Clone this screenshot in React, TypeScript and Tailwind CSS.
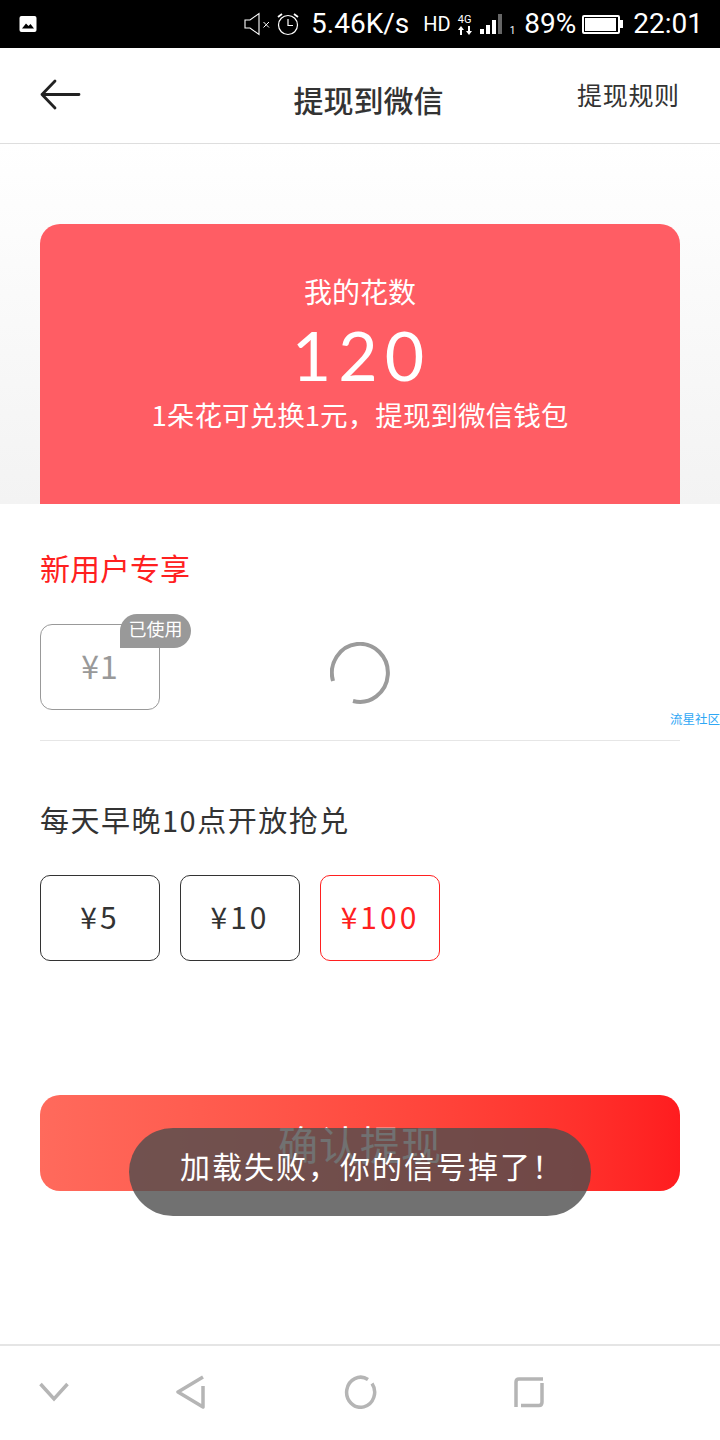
const CJK = "font-['Noto_Sans_CJK_SC','Noto_Sans',sans-serif]"

function StatusBar() {
  return (
    <div className="h-12 bg-black flex items-center text-white font-['Roboto',sans-serif] shrink-0 pl-[19px] pr-[17px]">
      <svg width="18" height="18" viewBox="0 0 18 18">
        <rect x="0.5" y="1" width="17" height="16" rx="2" fill="#fff" />
        <path d="M3 13.5 L7 8.5 L9.5 11 L11.5 9 L15 13.5 Z" fill="#000" />
      </svg>
      <div className="flex-1" />
      <svg width="26" height="24" viewBox="0 0 26 24" fill="none" stroke="#fff" strokeWidth="1.1">
        <path d="M1 8 H6 L15 1.5 V22.5 L6 16 H1 Z" />
        <path d="M19.5 10 L25 15.5 M25 10 L19.5 15.5" strokeWidth="1" />
      </svg>
      <svg className="ml-[6px]" width="24" height="24" viewBox="0 0 24 24" fill="none" stroke="#fff" strokeWidth="1.2">
        <circle cx="12" cy="13" r="9.5" />
        <path d="M12 7 V13.5 H17" />
        <path d="M2 5 L6 2 M22 5 L18 2" strokeWidth="1.8" />
      </svg>
      <span className="ml-[11px] text-[28px] leading-none">5.46K/s</span>
      <span className="ml-[14px] text-[20px] leading-none">HD</span>
      <div className="ml-[6px] flex flex-col items-center w-4 leading-none">
        <span className="text-[11px] leading-[12px]">4G</span>
        <svg width="14" height="9" viewBox="0 0 14 9" fill="#fff">
          <path d="M3 0 L6 4 H4 V9 H2 V4 H0 Z M11 9 L8 5 H10 V0 H12 V5 H14 Z" />
        </svg>
      </div>
      <div className="ml-[7px] flex items-end gap-[2px] h-[20px]">
        <div className="w-1 h-[5px] bg-white" />
        <div className="w-1 h-[9px] bg-white" />
        <div className="w-1 h-[14px] bg-white" />
        <div className="w-1 h-[20px] bg-[#666]" />
      </div>
      <span className="ml-[8px] text-[10px] leading-none self-end mb-[12px]">1</span>
      <span className="ml-[9px] text-[28px] leading-none">89%</span>
      <div className="ml-[6px] flex items-center">
        <div className="w-[38px] h-[19px] border-2 border-white rounded-[2px] p-[1px]">
          <div className="w-[95%] h-full bg-white" />
        </div>
        <div className="w-[3px] h-[8px] bg-white" />
      </div>
      <span className="ml-[10px] text-[28px] leading-none">22:01</span>
    </div>
  )
}

function Amount({ label, tone }: { label: string; tone: 'dark' | 'red' }) {
  return (
    <div
      className={
        tone === 'red'
          ? 'w-[120px] h-[86px] rounded-[10px] border border-[#ff2020] text-[#ff2020] flex items-center justify-center text-[30px] tracking-[3px] pb-[4px]'
          : 'w-[120px] h-[86px] rounded-[10px] border border-[#333] text-[#333] flex items-center justify-center text-[30px] tracking-[3px] pb-[4px]'
      }
    >
      {label}
    </div>
  )
}

function NavBar() {
  return (
    <div className="h-[96px] shrink-0 bg-white border-t-2 border-[#e5e5e5] flex items-center pb-[2px]">
      <div className="w-[108px] flex justify-center">
        <svg width="30" height="20" viewBox="0 0 30 20" fill="none" stroke="#b5b5b5" strokeWidth="3.5">
          <path d="M1.5 2 L15 17 L28.5 2" />
        </svg>
      </div>
      <svg className="ml-[68px]" width="30" height="34" viewBox="0 0 30 34" fill="none" stroke="#b5b5b5" strokeWidth="3.5" strokeLinejoin="round">
        <path d="M27 2 L2 17 L27 32 V11" />
      </svg>
      <svg className="ml-[138px]" width="34" height="34" viewBox="0 0 34 34" fill="none" stroke="#b5b5b5" strokeWidth="3.5">
        <path d="M24 4.5 A14 15 0 1 0 28 8.5" />
      </svg>
      <svg className="ml-[136px]" width="30" height="32" viewBox="0 0 30 32" fill="none" stroke="#b5b5b5" strokeWidth="3.5">
        <path d="M29 3 H5 Q2 3 2 6 V31 M7 29.5 H25 Q28 29.5 28 26 V7" />
      </svg>
    </div>
  )
}

export default function App() {
  return (
    <div className={`relative w-[720px] h-[1440px] flex flex-col bg-white overflow-hidden ${CJK}`}>
      <StatusBar />

      <header className="h-[96px] shrink-0 border-b border-[#dedede] flex items-center px-[40px]">
        <svg className="-mt-[2px]" width="42" height="32" viewBox="0 0 42 32" fill="none" stroke="#222" strokeWidth="2.8" strokeLinecap="round" strokeLinejoin="round">
          <path d="M15 2 L2 15.5 L15 29 M2 15.5 H39" />
        </svg>
        <h1 className="flex-1 text-center text-[30px] font-medium text-[#333] pl-[78px] leading-none mt-[6px]">提现到微信</h1>
        <span className="text-[25px] tracking-[0.7px] text-[#333] leading-none -mt-[2px] w-[103px] whitespace-nowrap">提现规则</span>
      </header>

      <div className="h-[360px] shrink-0 bg-gradient-to-b from-white to-[#f3f3f3] px-[40px] pt-[80px]">
        <div className="h-[280px] rounded-t-[20px] bg-[#ff5d64] text-white flex flex-col items-center">
          <p className="mt-[48px] text-[28px] leading-[38px]">我的花数</p>
          <p className="mt-[5px] pl-[3px] text-[68px] leading-[80px] font-['Lato',sans-serif] tracking-[7px]">120</p>
          <p className="text-[27.6px] leading-[36px] mt-[1px]">1朵花可兑换1元，提现到微信钱包</p>
        </div>
      </div>

      <div className="px-[40px] flex-1 min-h-0 flex flex-col">
        <p className="mt-[43px] text-[30px] leading-[40px] text-[#ff2020]">新用户专享</p>

        <div className="relative mt-[37px] h-[86px] flex">
          <div className="w-[120px] h-[86px] rounded-[12px] border border-[#999] text-[#999] flex items-center justify-center text-[32px] tracking-[1px] pb-[4px]">
            ¥1
          </div>
          <div className="absolute left-[80px] -top-[10px] w-[71px] h-[34px] pb-[6px] bg-[#999] text-white rounded-tl-[18px] rounded-tr-[18px] rounded-br-[18px] text-[18px] leading-[28px] text-center">
            已使用
          </div>
          <svg className="absolute left-[290px] top-[18px]" width="62" height="62" viewBox="0 0 62 62" fill="none" stroke="#9b9b9b" strokeWidth="4">
            <path d="M3 39 A28 29 0 1 1 23 59" />
          </svg>
          <span className="absolute left-[630px] top-[87px] text-[12.5px] leading-[16px] text-[#2ea7f5] whitespace-nowrap">流星社区</span>
        </div>

        <div className="mt-[30px] border-t border-[#e6e6e6]" />

        <p className="mt-[58px] text-[29px] tracking-[1.5px] leading-[40px] text-[#333]">每天早晚10点开放抢兑</p>

        <div className="mt-[36px] flex gap-[20px]">
          <Amount label="¥5" tone="dark" />
          <Amount label="¥10" tone="dark" />
          <Amount label="¥100" tone="red" />
        </div>

        <button className="mt-[134px] h-[96px] rounded-[20px] bg-gradient-to-r from-[#ff6a5c] to-[#ff1c1f] text-white text-[40px] tracking-[1px]">
          确认提现
        </button>
      </div>

      <div className="absolute left-[129px] top-[1128px] w-[462px] h-[88px] rounded-[44px] bg-[#4d4d4d]/80 text-white text-[30px] tracking-[2px] flex items-center pl-[51px] pb-[14px]">
        加载失败，你的信号掉了！
      </div>

      <NavBar />
    </div>
  )
}
